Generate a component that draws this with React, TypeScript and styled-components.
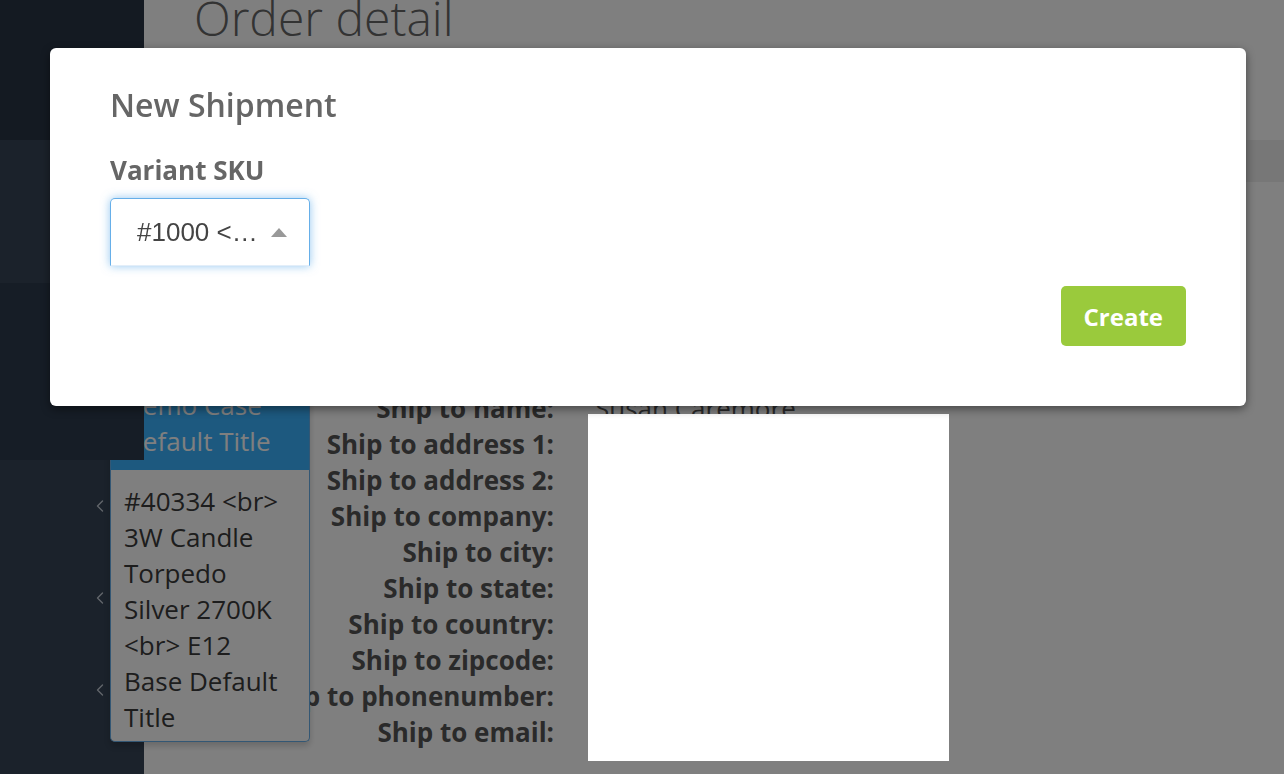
import styled, { createGlobalStyle } from 'styled-components'
import { ChevronLeft } from 'lucide-react'

const GlobalStyle = createGlobalStyle`
  html, body {
    margin: 0;
    padding: 0;
    height: 100%;
    overflow: hidden;
  }
  body {
    font-family: "Open Sans", "Liberation Sans", sans-serif;
    background: #fff;
  }
  #root {
    height: 100%;
  }
`

const Shell = styled.div`
  position: relative;
  display: flex;
  height: 100vh;
`

const Sidebar = styled.aside`
  width: 144px;
  flex-shrink: 0;
  display: flex;
  flex-direction: column;
  background: #364456;
`

const SidebarTop = styled.div`
  position: relative;
  z-index: 3;
  display: flex;
  flex-direction: column;
`

const SidebarBlock = styled.div<{ $h: number; $bg: string }>`
  height: ${(p) => p.$h}px;
  background: ${(p) => p.$bg};
`

const MenuItem = styled.div`
  height: 92px;
  display: flex;
  align-items: center;
  justify-content: flex-end;
  padding-right: 34px;
  color: #c4ccd6;
`

const Main = styled.main`
  flex: 1;
  display: flex;
  flex-direction: column;
  color: #555;
`

const PageTitle = styled.h1`
  margin: -10px 0 0 50px;
  font-size: 48px;
  font-weight: 300;
  line-height: 56px;
  color: #666;
`

const TabBar = styled.div`
  margin-top: 94px;
  height: 42px;
  background: #eee;
`

const ShipForm = styled.div`
  margin-top: 208px;
  display: grid;
  grid-template-columns: 410px 1fr;
  grid-auto-rows: 36px;
  column-gap: 41px;
  font-size: 26px;
  line-height: 36px;
`

const FieldName = styled.div`
  grid-column: 1;
  text-align: right;
  font-weight: 700;
  white-space: nowrap;
`

const FieldValue = styled.div`
  grid-column: 2;
  white-space: nowrap;
`

const Redaction = styled.div`
  grid-column: 2;
  grid-row: 2 / span 9;
  position: relative;
  z-index: 15;
  width: 361px;
  height: 347px;
  margin: -12px 0 -11px -7px;
  background: #fff;
`

const DropList = styled.ul`
  position: absolute;
  left: 110px;
  top: 266px;
  z-index: 2;
  width: 200px;
  box-sizing: border-box;
  margin: 0;
  padding: 0;
  list-style: none;
  background: #fff;
  border: 1px solid #66afe9;
  border-top: 0;
  border-radius: 0 0 5px 5px;
  box-shadow: 0 4px 6px rgba(0, 0, 0, 0.18);
  font-size: 26px;
  line-height: 36px;
  color: #444;
  overflow: hidden;
`

const DropOption = styled.li<{ $active?: boolean }>`
  padding: 13px 13px 11px;
  background: ${(p) => (p.$active ? '#3ab2ff' : 'transparent')};
  color: ${(p) => (p.$active ? '#fff' : '#3a3a3a')};

  &:last-child {
    padding-bottom: 6px;
  }
`

const Overlay = styled.div`
  position: fixed;
  inset: 0;
  z-index: 10;
  background: rgba(0, 0, 0, 0.5);
`

const Modal = styled.section`
  position: fixed;
  top: 48px;
  left: 50px;
  z-index: 20;
  width: 1196px;
  height: 358px;
  box-sizing: border-box;
  padding: 37px 60px 60px;
  display: flex;
  flex-direction: column;
  background: #fff;
  border-radius: 6px;
  box-shadow: 0 3px 10px rgba(0, 0, 0, 0.45);
`

const ModalTitle = styled.h2`
  margin: 0;
  font-size: 32px;
  font-weight: 600;
  line-height: 40px;
  color: #666;
`

const FieldLabel = styled.label`
  margin-top: 27px;
  font-size: 26px;
  font-weight: 700;
  line-height: 36px;
  color: #666;
`

const SelectBox = styled.div`
  margin-top: 10px;
  width: 200px;
  height: 68px;
  box-sizing: border-box;
  display: flex;
  align-items: center;
  gap: 8px;
  padding: 0 22px 0 26px;
  border: 1px solid #66afe9;
  border-bottom-color: #e3eef9;
  border-radius: 5px 5px 0 0;
  box-shadow: 0 0 10px rgba(102, 175, 233, 0.7);
  font-family: "Liberation Sans", Arial, sans-serif;
  font-size: 26px;
  color: #444;
`

const SelectText = styled.span`
  flex: 1;
  overflow: hidden;
  white-space: nowrap;
  text-overflow: ellipsis;
`

const Caret = styled.span`
  width: 0;
  height: 0;
  border-left: 8.5px solid transparent;
  border-right: 8.5px solid transparent;
  border-bottom: 9px solid #999;
`

const ModalFooter = styled.div`
  display: flex;
  justify-content: flex-end;
  margin-top: 20px;
`

const CreateButton = styled.button`
  height: 60px;
  padding: 0 23px;
  border: 0;
  border-radius: 5px;
  background: #9aca3c;
  color: #fff;
  font-family: "Open Sans", sans-serif;
  font-size: 24px;
  font-weight: 700;
`

const shipFields = [
  'Ship to name:',
  'Ship to address 1:',
  'Ship to address 2:',
  'Ship to company:',
  'Ship to city:',
  'Ship to state:',
  'Ship to country:',
  'Ship to zipcode:',
  'Ship to phonenumber:',
  'Ship to email:',
]

function App() {
  return (
    <>
      <GlobalStyle />
      <Shell>
        <Sidebar>
          <SidebarTop>
            <SidebarBlock $h={140} $bg="#283444" />
            <SidebarBlock $h={143} $bg="#364456" />
            <SidebarBlock $h={177} $bg="#2c3a4c" />
          </SidebarTop>
          {[0, 1, 2].map((i) => (
            <MenuItem key={i}>
              <ChevronLeft size={20} strokeWidth={1.6} />
            </MenuItem>
          ))}
        </Sidebar>
        <Main>
          <PageTitle>Order detail</PageTitle>
          <TabBar />
          <ShipForm>
            {shipFields.map((f, i) => (
              <FieldName key={f} style={{ gridRow: i + 1 }}>
                {f}
              </FieldName>
            ))}
            <FieldValue style={{ gridRow: 1 }}>Susan Caremore</FieldValue>
            <Redaction />
          </ShipForm>
        </Main>
        <DropList>
          <DropOption $active>#1000 &lt;br&gt; Smart Bulb Display &lt;br&gt; Demo Case Default Title</DropOption>
          <DropOption>#40334 &lt;br&gt; 3W Candle Torpedo Silver 2700K &lt;br&gt; E12 Base Default Title</DropOption>
        </DropList>
      </Shell>
      <Overlay />
      <Modal>
        <ModalTitle>New Shipment</ModalTitle>
        <FieldLabel>Variant SKU</FieldLabel>
        <SelectBox>
          <SelectText>#1000 &lt;br&gt; Smart Bulb</SelectText>
          <Caret />
        </SelectBox>
        <ModalFooter>
          <CreateButton>Create</CreateButton>
        </ModalFooter>
      </Modal>
    </>
  )
}

export default App
